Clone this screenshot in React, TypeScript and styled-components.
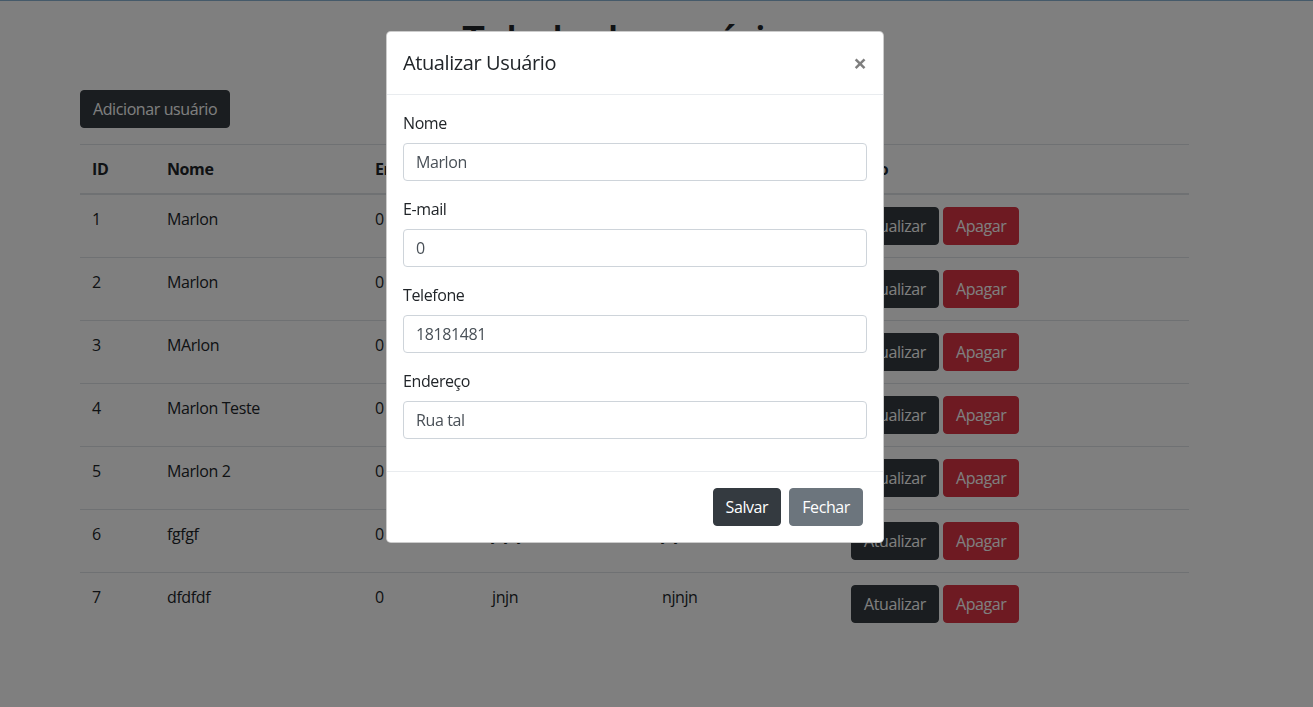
import React from 'react';
import styled, { createGlobalStyle } from 'styled-components';

const GlobalStyle = createGlobalStyle`
  * { box-sizing: border-box; }
  html, body {
    margin: 0;
    padding: 0;
    background: #fff;
    font-family: "Open Sans", "Noto Sans", Arial, sans-serif;
    font-size: 16px;
    line-height: 1.5;
    letter-spacing: -0.4px;
    color: #212529;
  }
`;

interface User {
  id: number;
  nome: string;
  email: string;
  telefone: string;
  endereco: string;
}

const users: User[] = [
  { id: 1, nome: 'Marlon', email: '0', telefone: '18181481', endereco: 'Rua tal' },
  { id: 2, nome: 'Marlon', email: '0', telefone: '18181481', endereco: 'Rua tal' },
  { id: 3, nome: 'MArlon', email: '0', telefone: '1234', endereco: 'Rua 1' },
  { id: 4, nome: 'Marlon Teste', email: '0', telefone: '4444', endereco: 'Rua teste' },
  { id: 5, nome: 'Marlon 2', email: '0', telefone: '2222', endereco: 'Rua 2' },
  { id: 6, nome: 'fgfgf', email: '0', telefone: 'jnjnjn', endereco: 'jnjn' },
  { id: 7, nome: 'dfdfdf', email: '0', telefone: 'jnjn', endereco: 'njnjn' },
];

const columns = [
  { label: 'ID', width: 75 },
  { label: 'Nome', width: 208 },
  { label: 'Email', width: 117 },
  { label: 'Telefone', width: 170 },
  { label: 'Endereço', width: 189 },
  { label: 'Ação', width: 350 },
];

const fields = [
  { label: 'Nome', value: 'Marlon' },
  { label: 'E-mail', value: '0' },
  { label: 'Telefone', value: '18181481' },
  { label: 'Endereço', value: 'Rua tal' },
];

export default function App() {
  return (
    <>
      <GlobalStyle />
      <Page>
        <Title>Tabela de usuários</Title>
        <Button $variant="dark">Adicionar usuário</Button>
        <Table>
          <colgroup>
            {columns.map(c => (
              <col key={c.label} style={{ width: c.width }} />
            ))}
          </colgroup>
          <thead>
            <tr>
              {columns.map(c => (
                <Th key={c.label}>{c.label}</Th>
              ))}
            </tr>
          </thead>
          <tbody>
            {users.map(u => (
              <tr key={u.id}>
                <Td>{u.id}</Td>
                <Td>{u.nome}</Td>
                <Td>{u.email}</Td>
                <Td>{u.telefone}</Td>
                <Td>{u.endereco}</Td>
                <Td>
                  <Actions>
                    <Button $variant="dark">Atualizar</Button>
                    <Button $variant="danger">Apagar</Button>
                  </Actions>
                </Td>
              </tr>
            ))}
          </tbody>
        </Table>
      </Page>

      <Backdrop />
      <TopLine />
      <Modal>
        <ModalHeader>
          <ModalTitle>Atualizar Usuário</ModalTitle>
          <Close aria-label="Close">×</Close>
        </ModalHeader>
        <ModalBody>
          {fields.map(f => (
            <FormGroup key={f.label}>
              <Label>{f.label}</Label>
              <Input defaultValue={f.value} />
            </FormGroup>
          ))}
        </ModalBody>
        <ModalFooter>
          <Button $variant="dark">Salvar</Button>
          <Button $variant="secondary">Fechar</Button>
        </ModalFooter>
      </Modal>
    </>
  );
}

const Page = styled.div`
  width: 1109px;
  margin-left: 80px;
  padding-top: 16px;
`;

const Title = styled.h1`
  margin: 0 0 26px;
  font-size: 40px;
  font-weight: 600;
  line-height: 48px;
  letter-spacing: -1px;
  text-align: center;
`;

const variants = {
  dark: { bg: '#343a40', color: '#fff' },
  danger: { bg: '#dc3545', color: '#fff' },
  secondary: { bg: '#6c757d', color: '#fff' },
};

const Button = styled.button<{ $variant: keyof typeof variants }>`
  display: inline-block;
  font-family: inherit;
  font-size: 16px;
  line-height: 24px;
  letter-spacing: inherit;
  padding: 6px 12px;
  border: 1px solid ${p => variants[p.$variant].bg};
  border-radius: 4px;
  background: ${p => variants[p.$variant].bg};
  color: ${p => variants[p.$variant].color};
  cursor: pointer;
  white-space: nowrap;
`;

const Table = styled.table`
  width: 100%;
  margin-top: 16px;
  border-collapse: collapse;
  table-layout: fixed;
`;

const Th = styled.th`
  padding: 12px;
  text-align: left;
  font-weight: 700;
  line-height: 24px;
  border-top: 1px solid #dee2e6;
  border-bottom: 2px solid #dee2e6;
`;

const Td = styled.td`
  padding: 12px;
  line-height: 24px;
  vertical-align: top;
  border-top: 1px solid #dee2e6;
`;

const Actions = styled.div`
  display: flex;
  gap: 4px;
`;

const Backdrop = styled.div`
  position: fixed;
  inset: 0;
  background: rgba(0, 0, 0, 0.5);
`;

const TopLine = styled.div`
  position: fixed;
  top: 0;
  left: 0;
  right: 0;
  height: 1px;
  background: #455a6a;
`;

const Modal = styled.div`
  position: fixed;
  top: 31px;
  left: 386px;
  width: 498px;
  background: #fff;
  border: 1px solid rgba(0, 0, 0, 0.2);
  border-radius: 4.8px;
  display: flex;
  flex-direction: column;
`;

const ModalHeader = styled.div`
  display: flex;
  align-items: flex-start;
  justify-content: space-between;
  padding: 16px;
  border-bottom: 1px solid #e9ecef;
`;

const ModalTitle = styled.h5`
  margin: 0;
  font-size: 20px;
  font-weight: 500;
  line-height: 30px;
`;

const Close = styled.button`
  padding: 19px 16px 13px;
  margin: -16px -16px -16px auto;
  background: transparent;
  border: 0;
  font-family: inherit;
  font-size: 24px;
  font-weight: 700;
  line-height: 1;
  color: #000;
  opacity: 0.5;
  text-shadow: 0 1px 0 #fff;
  cursor: pointer;
`;

const ModalBody = styled.div`
  padding: 16px;
`;

const FormGroup = styled.div`
  margin-bottom: 16px;
`;

const Label = styled.label`
  display: block;
  margin-bottom: 8px;
  line-height: 24px;
`;

const Input = styled.input`
  display: block;
  width: 100%;
  height: 38px;
  padding: 6px 12px;
  font-family: inherit;
  font-size: 16px;
  line-height: 24px;
  letter-spacing: inherit;
  color: #495057;
  background: #fff;
  border: 1px solid #ced4da;
  border-radius: 4px;
  outline: none;
`;

const ModalFooter = styled.div`
  display: flex;
  justify-content: flex-end;
  align-items: center;
  gap: 8px;
  padding: 16px 20px 16px 19px;
  border-top: 1px solid #e9ecef;
`;
